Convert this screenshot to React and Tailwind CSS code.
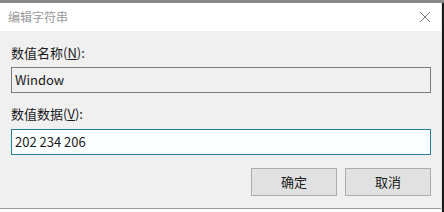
export default function App() {
  const font = { fontFamily: '"Noto Sans CJK SC", "Noto Sans", sans-serif' };
  return (
    <div className="w-[444px] h-[212px] overflow-hidden bg-[#d9d9d9] flex flex-col" style={font}>
      {/* background window peeking at the top */}
      <div className="h-[3px] bg-[#8a8a8a] shrink-0" />
      <div className="flex flex-1 min-h-0">
        <div className="w-[441px] flex flex-col">
          {/* Title bar */}
          <div className="h-[28px] bg-white flex items-center justify-between pl-[8px] pr-[10px] shrink-0">
            <span className="text-[12px] text-[#9a9a9a] leading-none">编辑字符串</span>
            <svg width="12" height="12" viewBox="0 0 12 12" className="text-[#7a7a7a]">
              <path d="M1 1 L11 11 M11 1 L1 11" stroke="currentColor" strokeWidth="1" fill="none" />
            </svg>
          </div>

          {/* Body */}
          <div className="flex-1 bg-[#f0f0f0] px-[11px] pt-[13px] text-[#1a1a1a]">
            <div className="text-[13px] leading-[18px]">
              数值名称(<span className="underline">N</span>):
            </div>
            <div className="mt-[5px] w-[420px] h-[26px] border border-[#7a7a7a] bg-[#f0f0f0] flex items-center px-[3px] text-[13px]">
              Window
            </div>

            <div className="mt-[12px] text-[13px] leading-[18px]">
              数值数据(<span className="underline">V</span>):
            </div>
            <div className="mt-[6px] w-[420px] h-[26px] border border-[#2b7f95] bg-[#fbfefe] flex items-center px-[3px] text-[13px]">
              202 234 206
            </div>

            <div className="mt-[13px] flex justify-end gap-[8px] w-[420px]">
              <button className="w-[86px] h-[28px] bg-[#e1e1e1] border border-[#adadad] text-[13px] text-[#1a1a1a]">
                确定
              </button>
              <button className="w-[86px] h-[28px] bg-[#e1e1e1] border border-[#adadad] text-[13px] text-[#1a1a1a]">
                取消
              </button>
            </div>
          </div>
          <div className="h-[1px] bg-[#9a9a9a] shrink-0" />
          <div className="h-[3px] bg-white shrink-0" />
        </div>
        <div className="w-[1px] bg-[#e0e0e0]" />
        <div className="w-[2px] bg-[#1a1a1a]" />
      </div>
    </div>
  );
}
